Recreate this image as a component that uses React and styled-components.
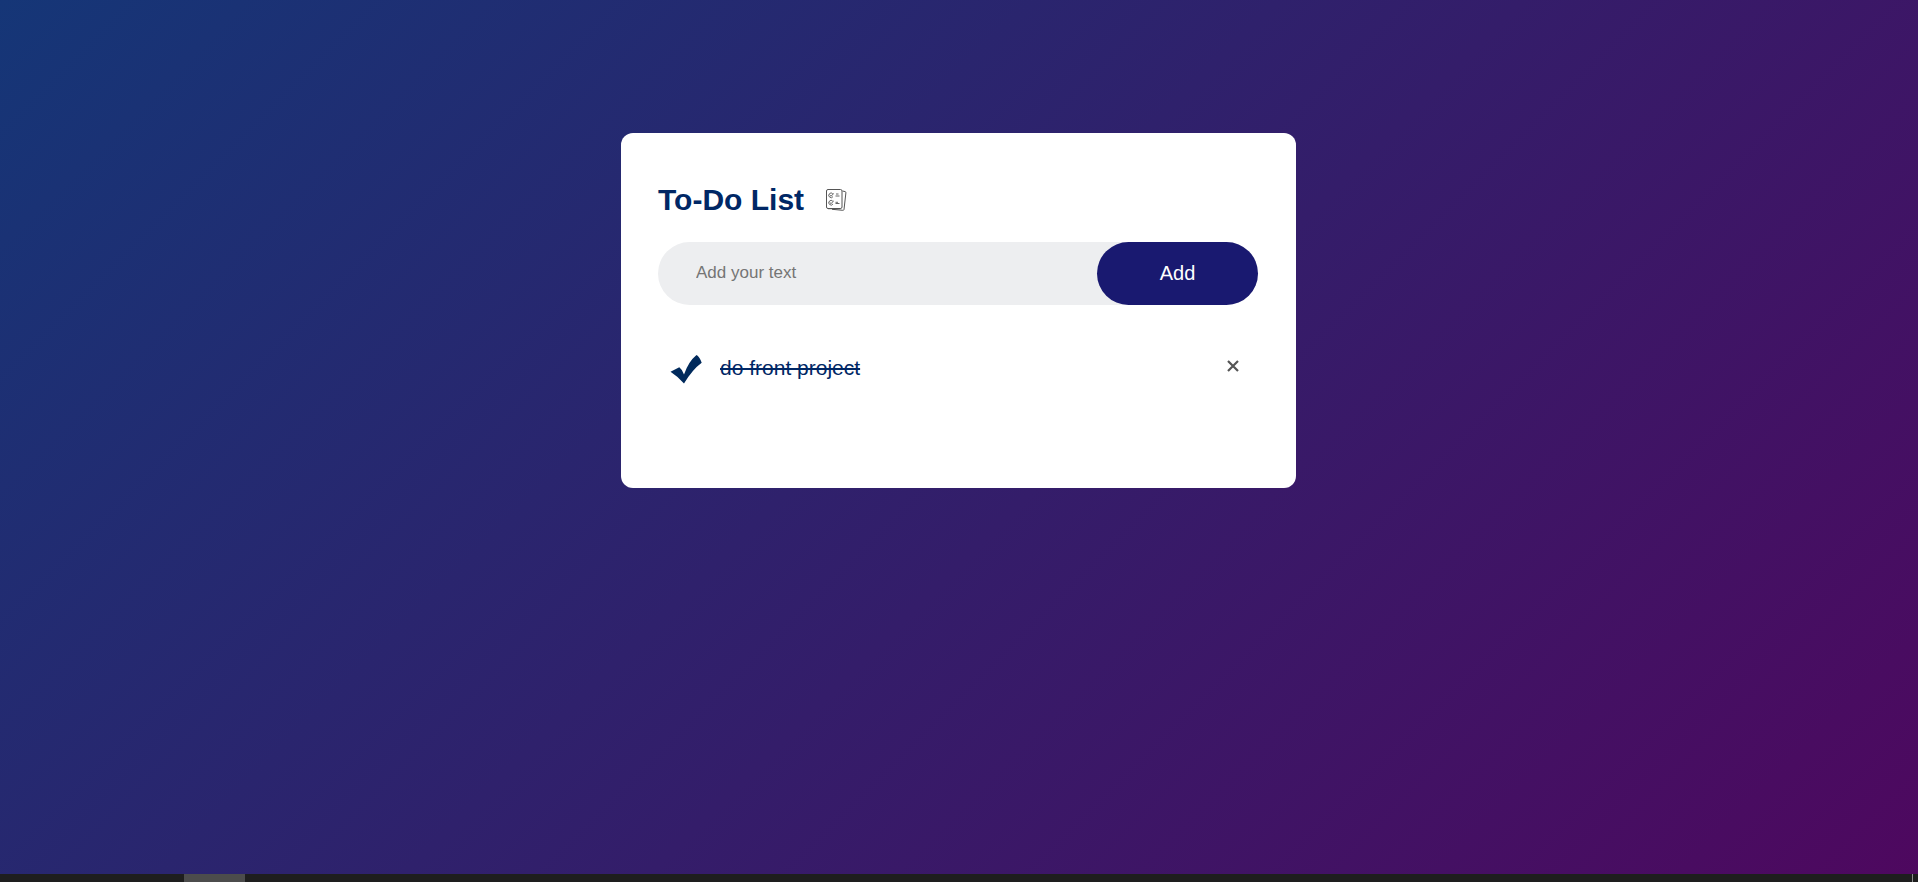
import React, { useState } from "react";
import styled, { createGlobalStyle } from "styled-components";

const GlobalStyle = createGlobalStyle`
  * { box-sizing: border-box; margin: 0; padding: 0; }
  body { font-family: "Liberation Sans", Arial, sans-serif; }
`;

const Page = styled.div`
  display: flex;
  flex-direction: column;
  min-height: 100vh;
  background: linear-gradient(135deg, #153677, #4e085f);
`;

const Main = styled.main`
  flex: 1;
  padding: 133px 17px 24px 16px;
`;

const Card = styled.section`
  width: 100%;
  max-width: 675px;
  margin: 0 auto;
  padding: 50px 38px 89px 37px;
  border-radius: 12px;
  background: #fff;
`;

const Header = styled.header`
  display: flex;
  align-items: center;
  gap: 21px;
  margin-bottom: 25px;
`;

const Title = styled.h1`
  color: #002765;
  font-size: 30px;
  line-height: 34px;
`;

const EntryForm = styled.form`
  display: flex;
  height: 63px;
  margin-bottom: 28px;
  border-radius: 38px;
  background: #edeef0;
`;

const EntryInput = styled.input`
  flex: 1;
  min-width: 0;
  padding: 0 12px 2px 38px;
  border: none;
  outline: none;
  background: transparent;
  color: #222;
  font: 17px "Liberation Sans", Arial, sans-serif;
  &::placeholder { color: #757575; }
`;

const AddButton = styled.button`
  width: 161px;
  border: none;
  border-radius: 38px;
  background: #191970;
  color: #fff;
  font: 20px "Liberation Sans", Arial, sans-serif;
  cursor: pointer;
`;

const TaskList = styled.ul`
  list-style: none;
`;

const TaskRow = styled.li`
  display: flex;
  align-items: center;
  justify-content: space-between;
  height: 66px;
  padding: 0 10px 0 12px;
`;

const TaskLabel = styled.label`
  position: relative;
  display: flex;
  align-items: center;
  gap: 18px;
  padding-top: 4px;
  color: #002765;
  font-size: 21px;
  line-height: 24px;
  cursor: pointer;
  text-decoration: ${(p) => (p.$done ? "line-through" : "none")};
`;

const TaskCheckbox = styled.input`
  position: absolute;
  left: 0;
  width: 32px;
  height: 32px;
  opacity: 0;
  cursor: pointer;
`;

const RemoveButton = styled.button`
  display: grid;
  place-items: center;
  width: 30px;
  height: 30px;
  border: none;
  background: transparent;
  color: #555;
  cursor: pointer;
`;

const BottomBar = styled.footer`
  display: flex;
  justify-content: space-between;
  height: 8px;
  padding: 0 5px 0 184px;
  background: #1e1e1e;
`;

const ActiveTab = styled.span`
  width: 61px;
  background: #4c4c4c;
`;

const EdgeMark = styled.span`
  width: 1px;
  background: #8c8c8c;
`;

function ListIcon() {
  return (
    <svg width="22" height="24" viewBox="0 0 22 24" fill="none" stroke="#555" aria-hidden="true">
      <path d="M17.500 3l2.700.6c.6.2.8.6.7 1.200L19 21.500c-.1.600-.6.900-1.200.8L7 21.300" strokeWidth="1" />
      <rect x="1.500" y="1.500" width="15.500" height="19" rx="1.500" strokeWidth="1" />
      <path d="M3 20.600h12.500" strokeWidth="1.200" />
      <g strokeWidth=".9">
        <path d="M7.800 5.800A2.300 2.300 0 1 0 8 8.600M4.700 7l1.300 1.200L8.800 5.500" />
        <path d="M7.800 13.200A2.300 2.300 0 1 0 8 16M4.700 14.400L6 15.600l2.800-2.700" />
        <path d="M11 6h2.500M10.500 8h4M10.500 14.300h2.500M10.500 15.500h4" />
      </g>
    </svg>
  );
}

function CheckIcon() {
  return (
    <svg width="32" height="32" viewBox="0 0 32 32" aria-hidden="true">
      <path
        d="M0.500 19.700L9.300 15.300Q12.300 17.500 14 22.500Q18.500 9.500 26.500 3Q29.500 4.500 31.700 10.800Q22.500 17.500 14 31.500Q8 24.500 0.500 19.700Z"
        fill="#002a5c"
      />
    </svg>
  );
}

function CrossIcon() {
  return (
    <svg width="12" height="12" viewBox="0 0 12 12" stroke="currentColor" strokeWidth="2.200" aria-hidden="true">
      <path d="M1 1l10 10M11 1L1 11" />
    </svg>
  );
}

export default function App() {
  const [text, setText] = useState("");
  const [tasks, setTasks] = useState([{ id: 1, name: "do front project", done: true }]);

  const addTask = (e) => {
    e.preventDefault();
    if (!text.trim()) return;
    setTasks([...tasks, { id: Date.now(), name: text.trim(), done: false }]);
    setText("");
  };
  const toggle = (id) => setTasks(tasks.map((t) => (t.id === id ? { ...t, done: !t.done } : t)));

  return (
    <Page>
      <GlobalStyle />
      <Main>
        <Card>
          <Header>
            <Title>To-Do List</Title>
            <ListIcon />
          </Header>
          <EntryForm onSubmit={addTask}>
            <EntryInput
              type="text"
              aria-label="Add your text"
              placeholder="Add your text"
              value={text}
              onChange={(e) => setText(e.target.value)}
            />
            <AddButton type="submit">Add</AddButton>
          </EntryForm>
          <TaskList>
            {tasks.map((task) => (
              <TaskRow key={task.id}>
                <TaskLabel $done={task.done}>
                  <TaskCheckbox type="checkbox" checked={task.done} onChange={() => toggle(task.id)} />
                  {task.done ? (
                    <CheckIcon />
                  ) : (
                    <svg width="32" height="32" viewBox="0 0 32 32" aria-hidden="true">
                      <circle cx="16" cy="16" r="11" fill="none" stroke="#002a5c" />
                    </svg>
                  )}
                  <span>{task.name}</span>
                </TaskLabel>
                <RemoveButton
                  type="button"
                  aria-label={`Remove ${task.name}`}
                  onClick={() => setTasks(tasks.filter((t) => t.id !== task.id))}
                >
                  <CrossIcon />
                </RemoveButton>
              </TaskRow>
            ))}
          </TaskList>
        </Card>
      </Main>
      <BottomBar>
        <ActiveTab />
        <EdgeMark />
      </BottomBar>
    </Page>
  );
}
